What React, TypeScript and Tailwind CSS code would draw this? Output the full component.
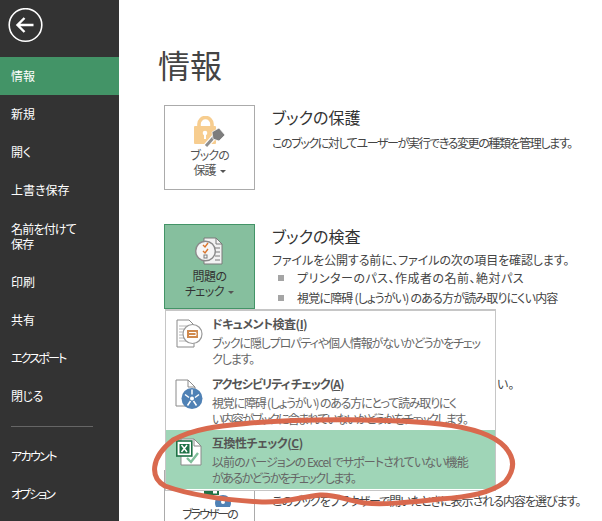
const FONT = "font-['Noto_Sans_CJK_JP','Noto_Sans',sans-serif] [font-feature-settings:'palt']";

const navTop = [
  { label: "新規", cls: "" },
  { label: "開く", cls: "" },
  { label: "上書き保存", cls: "" },
];
const navMid = [
  { label: "印刷", cls: "" },
  { label: "共有", cls: "" },
  { label: "エクスポート", cls: "tracking-[-1.8px]" },
  { label: "閉じる", cls: "tracking-[-0.5px]" },
];
const navBottom = [
  { label: "アカウント", cls: "tracking-[-1.6px]" },
  { label: "オプション", cls: "tracking-[-2px]" },
];

function NavItem({ label, cls }: { label: string; cls: string }) {
  return <div className={`flex h-[38px] items-center pl-[11px] text-[12px] text-white ${cls}`}>{label}</div>;
}

function Sidebar() {
  return (
    <aside className="flex h-[521px] w-[119px] shrink-0 flex-col bg-[#333333]">
      <div className="flex h-[57px] items-start pl-2 pt-2">
        <svg width="35" height="35" viewBox="0 0 35 35" fill="none" stroke="#fff">
          <circle cx="17.5" cy="17" r="16.3" strokeWidth="1.6" />
          <path d="M9.5 17H25.5M16.5 10L9.5 17L16.5 24" strokeWidth="2.4" />
        </svg>
      </div>
      <div className="flex h-[38px] items-center bg-[#439467] pl-[11px] text-[12px] text-white">情報</div>
      {navTop.map((n) => (
        <NavItem key={n.label} {...n} />
      ))}
      <div className="flex h-[54px] flex-col justify-center pl-[11px] text-[12px] leading-[15px] tracking-[-0.8px] text-white">
        <span>名前を付けて</span>
        <span>保存</span>
      </div>
      {navMid.map((n) => (
        <NavItem key={n.label} {...n} />
      ))}
      <div className="mx-[11px] mt-[11px] mb-[10px] h-px w-[82px] bg-[#666666]" />
      {navBottom.map((n) => (
        <NavItem key={n.label} {...n} />
      ))}
    </aside>
  );
}

function LockIcon() {
  return (
    <svg width="31" height="32" viewBox="0 0 31 32">
      <path d="M5 11V8a6.5 6.5 0 0 1 13 0v3" fill="none" stroke="#f7cd8f" strokeWidth="3.6" />
      <rect x="0" y="10" width="22" height="18" rx="1" fill="#f7cd8f" />
      <circle cx="11" cy="17" r="2.3" fill="#fff" />
      <rect x="10" y="17" width="2" height="6" fill="#fff" />
      <path d="M12 30L20 21" stroke="#fff" strokeWidth="5.5" />
      <path d="M12 30L20 21" stroke="#8f8f8f" strokeWidth="3" />
      <path d="M18 16l7-4 6 7-6 6-6-2z" fill="#7d7d7d" stroke="#fff" strokeWidth="0.7" />
    </svg>
  );
}

function CheckDocIcon() {
  return (
    <svg width="29" height="29" viewBox="0 0 29 29" fill="none">
      <path d="M9 1H21L27 7V27H9Z" fill="#f2f2f2" stroke="#7b7b7b" />
      <path d="M21 1V7H27" stroke="#7b7b7b" />
      <path d="M20 11h5M20 15h5M20 19h5M20 23h5" stroke="#7b7b7b" />
      <circle cx="10.5" cy="14" r="9.8" fill="#f5f5f5" stroke="#8a8a8a" strokeWidth="1.4" />
      <path d="M8 8l2 2 3-4M8 14l2 2 3-4" stroke="#d9762e" strokeWidth="1.4" />
      <rect x="9" y="18" width="3" height="3" stroke="#7b7b7b" />
    </svg>
  );
}

function InspectIcon() {
  return (
    <svg width="27" height="29" viewBox="0 0 27 29" fill="none">
      <path d="M1 1H13L18 6V28H1Z" fill="#fff" stroke="#8a8a8a" />
      <path d="M3 7h9M3 10h9M3 13h8M3 16h8M3 19h8M3 22h9" stroke="#b5b5b5" />
      <circle cx="16.5" cy="15" r="9.5" fill="#fff" stroke="#9a9a9a" strokeWidth="1.2" />
      <rect x="11" y="11" width="11" height="8" fill="#d08a4e" />
      <path d="M13 13.5h7v3h-7" stroke="#fff" />
    </svg>
  );
}

function AccessIcon() {
  return (
    <svg width="28" height="31" viewBox="0 0 28 31" fill="none">
      <path d="M1 1H13L20 8V27H1Z" fill="#fff" stroke="#8a8a8a" />
      <path d="M13 1V8H20" stroke="#8a8a8a" />
      <circle cx="17" cy="19.5" r="10.5" fill="#4f81b5" />
      <circle cx="17" cy="19.5" r="2" fill="#fff" />
      <path d="M17 10.5v5M10 15.5l4 3M24 15.5l-4 3M12.5 26.5l3-4.500M21.500 26.500l-3-4.500" stroke="#fff" strokeWidth="1.5" />
    </svg>
  );
}

function CompatIcon() {
  return (
    <svg width="27" height="28" viewBox="0 0 27 28" fill="none">
      <path d="M5 1H18L25 8V27H5Z" fill="#fff" stroke="#8a8a8a" />
      <path d="M18 1V8H25" stroke="#8a8a8a" />
      <rect x="0.8" y="3" width="15" height="15" fill="#fff" stroke="#1e7145" strokeWidth="1.6" />
      <path d="M3.500 6h10v9.500h-10z" fill="#1e7145" />
      <path d="M5.500 7l5.500 7M11 7l-5.500 7" stroke="#fff" strokeWidth="1.5" />
      <path d="M11 20l4 4 7-9" stroke="#7fbf9a" strokeWidth="2.4" />
    </svg>
  );
}

function BrowserIcon() {
  return (
    <svg width="46" height="17" viewBox="0 0 46 17" fill="none">
      <rect x="17" y="0" width="15" height="5" fill="#1e7145" />
      <rect x="26" y="1" width="4" height="2.500" fill="#fff" />
      <circle cx="36" cy="13" r="8" fill="#4f81b5" />
      <circle cx="36" cy="12" r="2" fill="#fff" />
    </svg>
  );
}

function Caret() {
  return <span className="ml-1 inline-block h-0 w-0 border-x-[3px] border-t-[3px] border-x-transparent border-t-[#555555] align-middle" />;
}

function MenuRow({
  icon,
  title,
  titleCls,
  lines,
  active,
  height,
}: {
  icon: React.ReactNode;
  title: React.ReactNode;
  titleCls: string;
  lines: { text: string; cls: string }[];
  active?: boolean;
  height: string;
}) {
  return (
    <div className={`flex ${height} ${active ? "bg-[#9fd5b7]" : ""}`}>
      <div className="flex w-[46px] shrink-0 justify-center pt-[8px]">{icon}</div>
      <div className="pt-[4px]">
        <div className={`text-[12px] leading-[17px] font-bold text-[#555555] ${titleCls}`}>{title}</div>
        <div className="mt-[3px] text-[12px] leading-[15.500px] text-[#666666]">
          {lines.map((l) => (
            <div key={l.text} className={`whitespace-nowrap ${l.cls}`}>
              {l.text}
            </div>
          ))}
        </div>
      </div>
    </div>
  );
}

function DropMenu() {
  return (
    <div className="absolute top-[309px] left-[165px] w-[331px] border border-t-2 border-[#c6c6c6] bg-white pb-px">
      <MenuRow
        height="h-[60px]"
        icon={<InspectIcon />}
        titleCls="tracking-[-0.5px]"
        title={
          <>
            ドキュメント検査(<span className="underline">I</span>)
          </>
        }
        lines={[
          { text: "ブックに隠しプロパティや個人情報がないかどうかをチェッ", cls: "tracking-[-1.1px]" },
          { text: "クします。", cls: "tracking-[-1.1px]" },
        ]}
      />
      <MenuRow
        height="h-[59px]"
        icon={<AccessIcon />}
        titleCls="tracking-[-1px]"
        title={
          <>
            アクセシビリティ チェック(<span className="underline">A</span>)
          </>
        }
        lines={[
          { text: "視覚に障碍 (しょうがい) のある方にとって読み取りにく", cls: "tracking-[-1.2px]" },
          { text: "い内容がブックに含まれていないかどうかをチェックします。", cls: "tracking-[-1.7px]" },
        ]}
      />
      <MenuRow
        active
        height="h-[59px]"
        icon={<CompatIcon />}
        titleCls="tracking-[-0.5px]"
        title={
          <>
            互換性チェック(<span className="underline">C</span>)
          </>
        }
        lines={[
          { text: "以前のバージョンの Excel でサポートされていない機能", cls: "tracking-[-0.9px]" },
          { text: "があるかどうかをチェックします。", cls: "tracking-[-1.5px]" },
        ]}
      />
    </div>
  );
}

export default function App() {
  return (
    <div className={`relative flex h-[521px] w-[602px] overflow-hidden bg-white ${FONT}`}>
      <Sidebar />
      <main className="min-w-0 flex-1 pl-[41px]">
        <h1 className="mt-[41px] -ml-[2px] text-[32px] leading-[46px] font-normal text-[#444444]">情報</h1>
        <section className="mt-[18px] ml-1 flex gap-[17px]">
          <div className="flex h-[85px] w-[91px] shrink-0 flex-col items-center border border-[#ababab] bg-white pt-[10px] text-[12px] leading-[15px] tracking-[-1px] text-[#555555]">
            <LockIcon />
            <span className="-mt-[1px]">ブックの</span>
            <span>
              保護
              <Caret />
            </span>
          </div>
          <div>
            <h2 className="text-[16px] leading-[24px] font-normal text-[#333333]">ブックの保護</h2>
            <p className="mt-[5px] text-[12px] leading-[17px] tracking-[-1.4px] whitespace-nowrap text-[#444444]">
              このブックに対してユーザーが実行できる変更の種類を管理します。
            </p>
          </div>
        </section>
        <section className="mt-[34px] ml-1 flex gap-[17px]">
          <div className="flex h-[85px] w-[91px] shrink-0 flex-col items-center border border-[#439467] bg-[#86bf9e] pt-[12px] text-[12px] leading-[15px] tracking-[-0.5px] text-[#333333]">
            <CheckDocIcon />
            <span className="mt-[2px]">問題の</span>
            <span>
              チェック
              <Caret />
            </span>
          </div>
          <div>
            <h2 className="text-[16px] leading-[24px] font-normal text-[#333333]">ブックの検査</h2>
            <p className="mt-[3px] text-[12px] leading-[17px] tracking-[-0.1px] whitespace-nowrap text-[#444444]">
              ファイルを公開する前に、ファイルの次の項目を確認します。
            </p>
            <ul className="text-[12px] leading-[20px] whitespace-nowrap text-[#444444]">
              <li className="flex items-center tracking-[0.5px]">
                <span className="mr-[13px] ml-[6px] h-[6px] w-[6px] bg-[#a5a5a5]" />
                プリンターのパス、作成者の名前、絶対パス
              </li>
              <li className="flex items-center tracking-[-0.8px]">
                <span className="mr-[13px] ml-[6px] h-[6px] w-[6px] bg-[#a5a5a5]" />
                視覚に障碍 (しょうがい) のある方が読み取りにくい内容
              </li>
            </ul>
          </div>
        </section>
        <p className="mt-[66px] ml-[337px] text-[12px] leading-[17px] text-[#444444]">い。</p>
        <section className="mt-[78px] ml-1 flex gap-[17px]">
          <div className="flex h-[60px] w-[91px] shrink-0 flex-col items-center border border-[#ababab] pt-[19px] text-[12px] leading-[15px] tracking-[-2px] text-[#444444]">
            <BrowserIcon />
            <span className="-mt-[1px]">ブラウザーの</span>
          </div>
          <p className="mt-[22px] text-[12px] leading-[17px] tracking-[-1px] whitespace-nowrap text-[#444444]">
            このブックをブラウザーで開いたときに表示される内容を選びます。
          </p>
        </section>
      </main>
      <DropMenu />
      <svg className="pointer-events-none absolute inset-0" width="602" height="521" viewBox="0 0 602 521" fill="none">
        <path
          d="M173 440C195 428 220 426 250 423C310 418 390 419 440 424C475 428 495 436 505 447C515 458 515 470 505 482C490 493 470 497 440 499C410 502 385 505 365 503C345 500 335 494 320 495C300 497 285 503 262 502C225 500 190 495 165 486C150 478 150 458 173 440Z"
          stroke="#d9694e"
          strokeWidth="5"
        />
      </svg>
    </div>
  );
}
